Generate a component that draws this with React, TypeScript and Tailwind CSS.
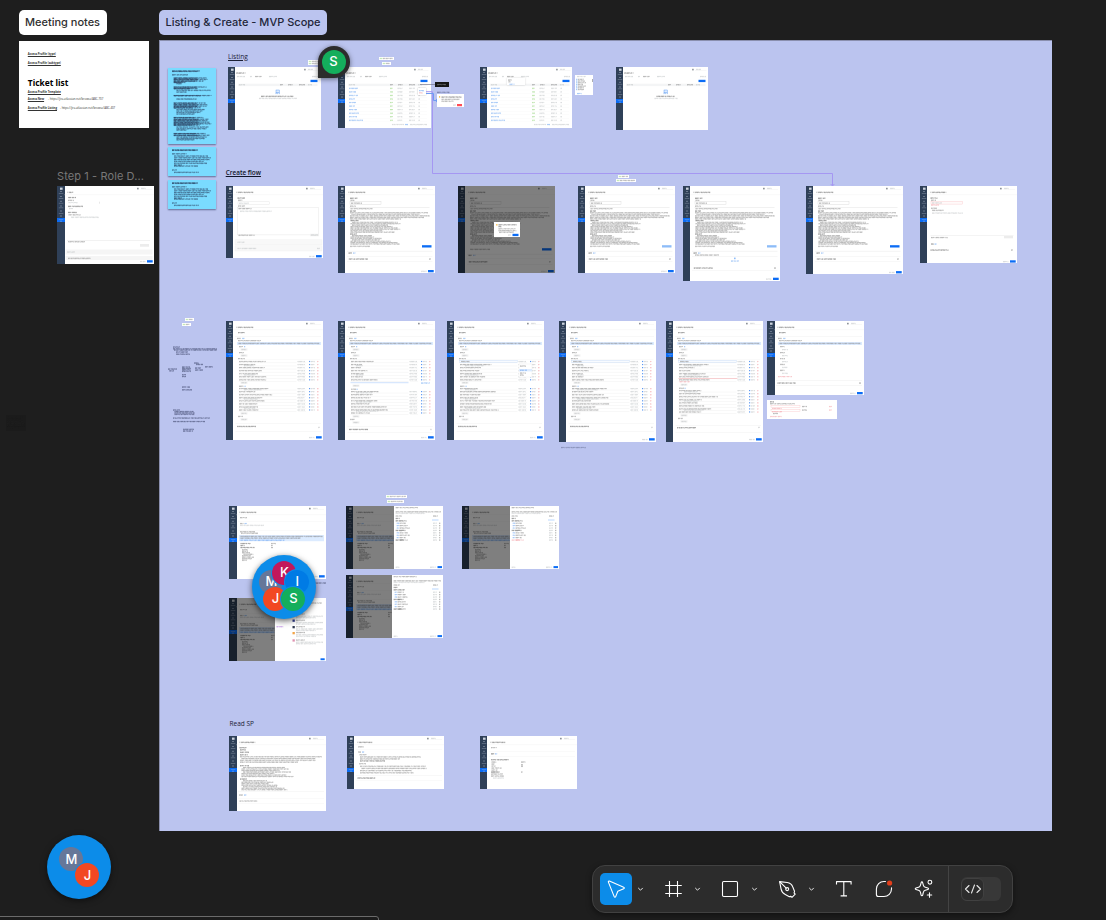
import React from "react";

type Tone = "d" | "m" | "l" | "b" | "r" | "g" | "n" | "p";
type Mark =
  | [kind: Tone, x: number, y: number, w: number]
  | [kind: "box", x: number, y: number, w: number, h: number, fill: string, stroke?: string];

const tones: Record<Tone, string> = {
  d: "#333333",
  m: "#6e6e6e",
  l: "#b2b5ba",
  b: "#4a90ee",
  r: "#f08a92",
  g: "#7ccb5c",
  n: "#1d2547",
  p: "#a050d8",
};

const noise = (n: number) => {
  const v = Math.sin(n * 127.1 + 11.7) * 43758.5453;
  return v - Math.floor(v);
};

function dashes(seed: number, min: number, span: number, gap: number) {
  const out: string[] = [];
  for (let i = 0; i < 24; i++) {
    out.push((min + noise(seed + i * 3.31) * span).toFixed(2), (0.3 + noise(seed + i * 7.93) * gap).toFixed(2));
  }
  return out.join(" ");
}

function Marks({ marks, w, h, strength = 1 }: { marks: Mark[]; w: number; h: number; strength?: number }) {
  return (
    <svg className="absolute left-0 top-0" width={w} height={h} viewBox={`0 0 ${w} ${h}`} aria-hidden="true">
      {marks.map((m, i) => {
        if (m[0] === "box") {
          return <rect key={i} x={m[1]} y={m[2]} width={m[3]} height={m[4]} fill={m[5]} stroke={m[6]} strokeWidth={0.4} />;
        }
        const [k, x, y, len] = m;
        const c = tones[k];
        const s = x * 1.7 + y * 3.1 + len;
        return (
          <g key={i} stroke={c} fill="none">
            <line x1={x} x2={x + len} y1={y} y2={y} strokeWidth={1.1} opacity={0.17 * strength} />
            <line x1={x} x2={x + len} y1={y - 0.1} y2={y - 0.1} strokeWidth={0.8} opacity={0.36 * strength} strokeDasharray={dashes(s, 0.6, 3.4, 1.3)} />
            <line x1={x} x2={x + len} y1={y + 0.4} y2={y + 0.4} strokeWidth={0.7} opacity={0.3 * strength} strokeDasharray={dashes(s + 5, 0.4, 2.2, 2.2)} />
          </g>
        );
      })}
    </svg>
  );
}

function Frame({
  x,
  y,
  w,
  h,
  marks,
  dimTo,
  children,
}: {
  x: number;
  y: number;
  w: number;
  h: number;
  marks: Mark[];
  dimTo?: number;
  children?: React.ReactNode;
}) {
  return (
    <div className="absolute flex overflow-hidden bg-white" style={{ left: x, top: y, width: w, height: h }}>
      <div className="relative w-[7.3px] shrink-0 bg-[#2f4058]">
        <div className="mt-[32px] h-[4px] w-full bg-[#0b6cf5]" />
        <svg className="absolute left-0 top-0" width="8" height="40" aria-hidden="true">
          {[5.5, 7.5, 10.5, 12.5, 15.3, 17.3, 20, 21.8, 25, 27.5, 30, 33.5, 35.2].map((v, i) => (
            <line key={v} x1={i % 2 ? 1.8 : 3} x2={i % 2 ? 6.3 : 5} y1={v} y2={v} stroke="#b9c4d4" strokeWidth="1" opacity={i % 2 ? 0.3 : 0.42} />
          ))}
          <rect x="3" y="1.6" width="2.6" height="2.2" fill="#e8edf4" opacity="0.85" />
        </svg>
      </div>
      <Marks marks={marks} w={w} h={h} />
      {dimTo !== undefined && <div className="absolute left-0 top-0 h-full bg-black/50" style={{ width: dimTo }} />}
      {children}
    </div>
  );
}

const head = (title = 15, right = 80): Mark[] => [
  ["box", right, 1.8, 1.7, 1.6, "#8d9298"],
  ["l", right + 4, 2.4, 5],
  ["box", right + 3.5, 3.6, 11.5, 0.3, "#e6e6e6"],
  ["m", 10.4, 6.2, 1],
  ["d", 12.2, 6.3, title],
  ["box", 7.3, 8.7, 90, 0.4, "#eeeeee"],
];

const foot = (y: number): Mark[] => [
  ["l", 83, y, 5.5],
  ["box", 90, y - 1.3, 5.7, 2.3, "#0b6cf5"],
];

const para = (x: number, y: number, widths: number[], step = 2, tone: Tone = "m"): Mark[] =>
  widths.map((v, i) => [tone, x + (v < 0 ? 1.5 : 0), y + i * step, Math.abs(v)] as Mark);

const proseA: Mark[] = [
  ["d", 12, 25, 6],
  ...para(12, 26.7, [78, -68, 80, 74, 51], 1.55),
  ["d", 12.5, 34.6, 8],
  ...para(12.5, 36.3, [-46, 50, -36, 42, 47, 50, 32, 44], 1.4),
  ["d", 12, 48, 7],
  ...para(12.5, 49.6, [-20, 24, 31, -28, 40, 47, 49], 1.4),
];

const form: Mark[] = [
  ["d", 12, 12.2, 7.5],
  ["m", 12.5, 14.3, 4.5],
  ["box", 12, 15.7, 31, 2.6, "#ffffff", "#d6d6d6"],
  ["m", 13, 17.1, 11],
  ["m", 12, 20.1, 6],
  ["box", 11.5, 21.6, 80, 0.4, "#dcdcdc"],
  ["m", 12.5, 22.7, 22],
];

const createFull = (btnY: number, btn: string, tasksY: number, textY: number, footY: number): Mark[] => [
  ...head(),
  ...form,
  ...proseA,
  ["m", 12, btnY, 20],
  ["box", 84, btnY - 1.1, 9.5, 2.3, btn],
  ["box", 9, btnY + 4.6, 85.5, 0.5, "#e8e8e8"],
  ["d", 10.5, tasksY, 3.5],
  ["b", 15, tasksY, 2.5],
  ["box", 9, tasksY + 3, 85.5, 0.4, "#ececec"],
  ["d", 10.8, textY, 19],
  ["m", 91, textY, 2],
  ["box", 9, textY + 2.6, 85.5, 0.4, "#ececec"],
  ...foot(footY),
];

const emptyForm: Mark[] = [
  ...head(),
  ["d", 11.5, 12, 7.5],
  ["m", 12, 14.2, 5],
  ["box", 12, 15.8, 31.5, 2.6, "#ffffff", "#e0e0e0"],
  ["l", 13, 17.2, 10],
  ["m", 12, 20, 7],
  ["box", 11.5, 21.4, 81, 27.5, "#ffffff", "#e2e2e2"],
  ["m", 12.5, 22.6, 13],
  ["l", 14, 25.2, 32],
  ["m", 12.5, 49.2, 16],
  ["box", 84, 47.8, 9, 2.4, "#f0f0f0"],
  ["l", 85, 49, 7],
];

const listHead: Mark[] = [
  ["box", 76, 1.8, 1.8, 1.6, "#9ba0a6"],
  ["l", 80, 2.4, 5],
  ["box", 79, 3.6, 11.5, 0.3, "#e6e6e6"],
  ["d", 8.3, 6, 9.5],
  ["l", 9, 9.5, 8],
  ["l", 22, 9.5, 2],
  ["m", 27, 9.5, 7],
  ["l", 41, 9.5, 8],
  ["l", 84, 9.5, 6],
  ["box", 82.5, 12.8, 7, 2.3, "#0b6cf5"],
  ["box", 10, 16.7, 79.5, 2.4, "#f4f5f6"],
  ["l", 11, 17.7, 6],
  ["m", 52, 17.7, 3],
  ["m", 60, 17.7, 4.5],
  ["m", 71, 17.7, 6],
  ["l", 80, 17.7, 4],
];

const listRows: Mark[] = Array.from({ length: 10 }, (_, i) => i)
  .flatMap((i): Mark[] => {
    const y = 21.3 + i * 3.55;
    return [
      ["b", 11, y, [9, 7, 9, 6, 7, 6, 8, 10, 8, 14][i]],
      ["g", 52, y, 3],
      ["l", 59.5, y, 5],
      ["l", 71, y, 6],
      ["l", 80.5, y, 1.5],
      ["box", 10, y + 1.6, 79, 0.2, "#f0f0f0"],
    ];
  })
  .concat([
    ["l", 54, 57.5, 12],
    ["b", 67, 57.5, 3],
    ["l", 72, 57.5, 17],
  ]);

const emptyState = (cx: number, w: number): Mark[] => [
  ["box", cx - 1.5, 23, 3.2, 2.8, "#dbeaff", "#4a90ee"],
  ["b", cx - 2, 26.4, 4.5],
  ["d", cx - w / 2, 29.3, w],
  ["l", cx - w / 2 - 2, 31.4, w + 5],
];

function taskTable(variant: number): Mark[] {
  const out: Mark[] = [
    ...head(15),
    ["d", 12, 11.6, 6.5],
    ["box", 9, 15.2, 86, 0.4, "#ededed"],
    ["m", 11, 17.4, 4],
    ["b", 16, 17.4, 2.5],
    ["m", 12, 19.6, 23],
    ["box", 11, 21, 84, 3, "#dcebff"],
    ["m", 12.5, 22.4, 81],
    ["m", 13, 25.6, 4],
    ["b", 18, 25.6, 1.2],
    ["box", 14.5, 27.3, 7, 2.4, "#f3f3f3"],
    ["l", 15.5, 28.5, 5],
    ["m", 13, 31.6, 5],
    ["box", 14.5, 33.3, 7, 2.4, "#f3f3f3"],
    ["l", 15.5, 34.5, 5],
    ["m", 12, 37.6, 7],
    ["box", 11.5, 38.6, 83, 0.3, "#efefef"],
  ];
  const alert = variant === 4;
  const shift = alert ? 2 : variant === 1 ? 3 : 0;
  const rows = [
    ...Array.from({ length: 7 }, (_, i) => 40.5 + i * 3.05),
    ...Array.from({ length: 8 }, (_, i) => 67.6 + shift + i * 3.05),
  ];
  rows.forEach((y, i) => {
    const rw = 9 + noise(i * 2.7 + variant * 0.3) * 25 + (i > 6 ? 6 : 0);
    out.push(
      ["m", 13, y, rw],
      ["l", 71.5, y, 7.5],
      ["box", 83, y - 0.6, 1.2, 1.2, "#5c98f2"],
      ["l", 85, y, 4],
      ["r", 91, y, 1.5],
      ["box", 12.5, y + 1.3, 58, 0.25, "#e2e2e2"],
      ["box", 72, y + 1.3, 8, 0.25, "#e6e6e6"],
    );
    if (i % 3 === 1) out.push(["l", 18, y + 1.1, rw * 0.6]);
  });
  if (variant > 1) out.push(["box", 12.5, 39.2, 58, 2.2, "#f8fbff", "#c3d9f5"], ["m", 14, 40.5, 9]);
  if (variant === 2)
    out.push(["box", 72, 43, 13, 13, "#ffffff", "#e8e8e8"], ["m", 73, 45, 6], ["box", 72, 48, 13, 2.4, "#dcebff"], ["b", 73, 49.2, 7], ["m", 73, 52, 6], ["m", 73, 54, 4]);
  if (alert) out.push(["box", 12.5, 57.1, 59, 0.6, "#f7b4b8"], ["r", 13.5, 60.7, 10]);
  if (variant === 1) out.push(["box", 12.5, 61.6, 58, 0.5, "#9dc3fa"], ["b", 83, 62, 9]);
  out.push(
    ["box", 14.5, 60.5 + shift, 7, 2.3, "#f3f3f3"],
    ["l", 15.5, 61.7 + shift, 5],
    ["m", 13, 65.2 + shift, 5],
    ["b", 18.5, 65.2 + shift, 1.2],
    ["box", 14.5, 91.2 + shift, 7, 2.3, "#f3f3f3"],
    ["l", 15.5, 92.4 + shift, 5],
    ["m", 12, 95.4 + shift, 5],
    ["box", 14.5, 97.2 + shift, 7, 2.3, "#f3f3f3"],
    ["l", 15.5, 98.5 + shift, 5],
    ["box", 9.5, 102.5 + shift, 85.5, 0.4, "#eeeeee"],
    ["d", 11, 105.4 + (variant === 1 ? 3 : alert ? 1.3 : 0), 19],
    ["l", 92, 105.4 + (variant === 1 ? 3 : 1), 2],
    ["box", 9.5, 110 + shift / 2, 85.5, 0.4, "#eeeeee"],
    ...foot(variant > 2 ? 118.5 : 116.5),
  );
  return out;
}

const reviewBody: Mark[] = [
  ...head(),
  ["m", 11, 11.6, 7],
  ["box", 9, 15, 86, 0.3, "#eeeeee"],
  ["m", 11, 17.5, 3.5],
  ["b", 15.5, 17.5, 2.5],
  ["l", 11, 19.3, 24],
  ["box", 9.5, 24, 85.5, 0.3, "#eeeeee"],
  ["m", 11, 25.7, 15],
  ["m", 12, 27.2, 17],
  ["box", 10, 29, 85, 6.2, "#dcebff"],
  ["m", 11.5, 30.4, 82],
  ["m", 11.5, 32.1, 60],
  ["b", 11.5, 34.2, 44],
  ["d", 11.5, 37.5, 10],
  ["m", 42, 37.5, 5],
  ["d", 11.5, 39.5, 4],
  ["m", 42, 39.5, 2],
  ["d", 11.5, 41.5, 14],
  ["m", 42, 41.5, 2],
  ...para(13, 43.7, [6, 6, 8, -10, 9, 12, 10, 5], 1.5),
];

const drawer = (x: number, w: number, footY: number, redRow = false): Mark[] => [
  ["box", x, 0, w, 80, "#ffffff"],
  ["m", x + 2, 1.6, w * 0.45],
  ["m", x + 2, 5.8, w - 4],
  ["l", x + 2, 7.3, w * 0.6],
  ["m", x + 2, 10, 6],
  ["m", x + w - 10, 10, 5],
  ["d", x + 2, 12.4, 4],
  ["box", x + w - 11, 13, 6.5, 2, "#dcebff"],
  ["d", x + 2, 14.8, 11],
  ...Array.from({ length: 8 }, (_, i): Mark[] => {
    const heading = i % 4 === 3;
    const red = redRow && i === 7;
    const y = 17.2 + i * 2.4;
    return [
      [red ? "r" : heading ? "d" : "b", x + (heading ? 2 : 3), y, heading ? 8 : 2.5],
      [red ? "r" : "m", x + 6, y, 6 + (i % 3) * 2],
      ["l", x + w - 10, y, 4],
      ["m", x + w - 4, y, 1.3],
    ];
  }).flat(),
  ["l", x + 2, footY, 4],
  ["l", x + w - 13, footY, 6],
  ["box", x + w - 5.5, footY - 1.1, 4.5, 2, "#0b6cf5"],
];

function Sticky({ h, marks }: { h: number; marks: Mark[] }) {
  return (
    <div className="relative w-full bg-[#7adbff] shadow-[0_1px_1.5px_rgba(40,50,90,0.6)]" style={{ height: h }}>
      <Marks marks={marks} w={48} h={h} strength={1.2} />
    </div>
  );
}

const stickyLong: Mark[] = [
  ["n", 4, 3, 28],
  ["n", 4, 3.3, 26],
  ["n", 4, 6.8, 16],
  ...[
    [10, 33], [11.5, 34], [13, 30], [14.3, 12], [19, 33], [20.5, 24], [27.5, 38], [35, 32], [36.7, 34], [38.2, 33], [39.7, 27],
    [49.5, 30], [51.2, 35], [52.7, 34], [54.2, 36], [55.7, 38], [57, 26], [65.5, 32], [67.2, 36],
  ].flatMap(([y, w]): Mark[] => [["n", 5.5, y, w], ["n", 6, y + 0.2, w * 0.7]]),
  ...[
    [15.7, 5], [22.3, 34], [24, 10], [31, 20], [41.5, 28], [43, 26], [44.5, 24], [46, 18], [59, 32], [60.7, 30], [62, 10],
    [69, 30], [70.5, 28], [71.8, 18],
  ].map(([y, w]): Mark => ["n", 8.5, y, w]),
];

const stickyShort: Mark[] = [
  ["n", 4, 3, 26],
  ["n", 4, 3.2, 24],
  ["n", 4, 6.8, 15],
  ...para(6, 9, [34, 37, 36, 30, 33, 8], 1.8, "n"),
  ["n", 6, 19, 24],
  ["n", 4, 23, 5],
  ["n", 6, 25.3, 25],
];

function Tag({ x, y, w }: { x: number; y: number; w: number }) {
  return (
    <div className="absolute h-[3px] bg-white" style={{ left: x, top: y, width: w }}>
      <Marks marks={[["g", 0.8, 1.4, 3], ["m", 4, 1.4, w - 5]]} w={w} h={3} />
    </div>
  );
}

function Avatar({ x, y, letter, tone }: { x: number; y: number; letter: string; tone: string }) {
  return (
    <div
      className={`absolute flex size-6 items-center justify-center rounded-full font-[Inter] text-[13px] font-medium text-white ${tone}`}
      style={{ left: x, top: y }}
    >
      {letter}
    </div>
  );
}

function Tool({ children, active, menu }: { children: React.ReactNode; active?: boolean; menu?: boolean }) {
  return (
    <div className="flex items-center">
      <button className={`flex size-8 items-center justify-center rounded-[5px] ${active ? "bg-[#0c8ce9]" : ""}`}>
        <svg width="24" height="24" viewBox="0 0 24 24" fill="none" stroke="#ffffff" strokeWidth="1.1" strokeLinecap="round" strokeLinejoin="round">
          {children}
        </svg>
      </button>
      {menu && (
        <div className="flex w-4 items-center justify-center">
          <svg width="8" height="8" viewBox="0 0 8 8" fill="none" stroke="#e6e6e6" strokeLinecap="round" strokeLinejoin="round">
            <path d="M2.5 3.2 4.5 5.2 6.5 3.2" />
          </svg>
        </div>
      )}
    </div>
  );
}

function Toolbar() {
  return (
    <div className="absolute left-[592px] top-[865px] flex h-[48px] w-[421px] items-center rounded-[13px] border border-[#414141] bg-[#2c2c2c] pl-[7px] shadow-[0_2px_6px_rgba(0,0,0,0.45)]">
      <div className="flex items-center gap-[9px]">
        <Tool active menu>
          <path d="M5.4 4.1c-.7-.2-1.2.3-1 1l5.8 14.5c.3.8 1.2.8 1.5 0l2.1-5.4 5.9-2.4c.8-.3.8-1.3 0-1.6z" />
        </Tool>
        <Tool menu>
          <path d="M8.5 4.5v15M16.5 4.5v15M4.8 8.5h15.4M4.8 16.5h15.4" strokeLinecap="square" />
        </Tool>
        <Tool menu>
          <rect x="4.5" y="4.5" width="15" height="15" rx="1.2" />
        </Tool>
        <Tool menu>
          <path d="M4.6 4.6 12.2 5.5c2.6.4 4.6 1.9 5.5 4.3l1.8 4.4c.1.7-.1 1.2-.5 1.6l1.2 1.4-3.2 3.1-1.4-1.1c-.5.4-1.1.5-1.7.2l-3.6-1.8c-2.3-1-3.7-3-4.2-5.4z" />
          <path d="M4.9 4.9 11.2 11.1" />
          <circle cx="12.2" cy="12.1" r="1.5" />
        </Tool>
      </div>
      <div className="ml-[9px] flex items-center gap-2">
        <Tool>
          <path d="M4.5 7.5V4.6h14.6v2.9M11.8 4.6v14.3M8.6 18.9H15" strokeLinecap="butt" />
        </Tool>
        <Tool>
          <path d="M13.5 4.5H12A7.5 7.5 0 0 0 4.4 12v5.5c0 1.2.8 2 2 2H12a7.6 7.6 0 0 0 7.5-7.5v-1.2" />
          <circle cx="17.6" cy="6" r="2.6" fill="#e03e1a" stroke="none" />
        </Tool>
        <Tool>
          <path d="M10.3 4.2c.6 0 .7.4.8.9l.7 2.5c.3 1 .9 1.6 1.9 1.9l2.5.8c1 .3 1 1.2 0 1.5l-2.5.8c-1 .3-1.6.9-1.9 1.9l-.7 2.8c-.3 1-1.3 1-1.6 0l-.7-2.8c-.3-1-.9-1.6-1.9-1.9l-2.5-.8c-1-.3-1-1.2 0-1.5l2.5-.8c1-.3 1.6-.9 1.9-1.9l.7-2.5c.1-.5.3-.9.8-.9z" transform="translate(-.4 .7)" />
          <circle cx="17.9" cy="5.2" r="1.9" />
          <path d="M17.5 15.8v4.4M15.3 18h4.4" />
        </Tool>
      </div>
      <div className="ml-[8px] h-full w-px bg-[#444444]" />
      <div className="ml-[12px] flex h-6 w-10 items-center rounded-[6px] bg-[#383838]">
        <div className="flex h-[23px] w-[23px] items-center justify-center rounded-[6px] border border-[#414141] bg-[#2c2c2c]">
          <svg width="18" height="12" viewBox="0 0 18 12" fill="none" stroke="#e6e6e6" strokeWidth="1.1" strokeLinecap="round" strokeLinejoin="round">
            <path d="M5 2.5 1.5 6 5 9.5M13 2.5 16.5 6 13 9.5M10.5 2 7.5 10" />
          </svg>
        </div>
      </div>
    </div>
  );
}

const blue = "#0b6cf5";
const paleBlue = "#8dbcf8";

const diagramNotes: Mark[] = [
  ["n", 5, 1, 7],
  ["n", 5, 2.8, 44],
  ["n", 6, 4, 43],
  ["n", 8, 6, 12],
  ["n", 8, 8.1, 14],
  ["n", 0, 23, 9],
  ["n", 1, 24.8, 5],
  ...para(14, 21, [8, 9, 9, 9], 1.4, "n"),
  ["n", 14, 28.7, 4],
  ["n", 14, 30.5, 4],
  ["n", 26, 17, 5],
  ["n", 28, 18.4, 7],
  ["n", 27, 22, 6],
  ["n", 27, 24, 8],
  ["n", 37, 20.8, 8],
  ["n", 14, 41, 8],
  ["n", 14, 43.8, 10],
  ["n", 5, 64, 7],
  ...para(6.5, 65.5, [19, 20, 20], 1.4, "n"),
  ["n", 5, 72, 37],
  ["n", 5, 75.5, 32],
  ["n", 15, 83.3, 11],
  ["n", 15, 85, 10],
];

export default function App() {
  return (
    <main className="relative h-[920px] w-[1106px] overflow-hidden bg-[#1e1e1e] font-[Inter,sans-serif]">
      <div className="absolute left-[6px] top-[415px] h-[16px] w-[20px] bg-[#1b1b1b]">
        <Marks marks={para(1, 2, [17, 14, 16, 19, 18, 15], 2.2)} w={20} h={16} strength={0.1} />
      </div>

      <div className="absolute left-[18.5px] top-[10px] flex flex-col items-start gap-[6px]">
        <div className="flex h-[24.5px] w-[88px] items-center justify-center whitespace-nowrap rounded-[5px] bg-white text-[11px] font-medium text-[#303030]">
          Meeting notes
        </div>
        <section className="h-[87.5px] w-[130.5px] bg-white px-[9.3px] font-['Open_Sans',sans-serif] text-[2.8px] text-[#333]">
          <p className="mt-[12px] h-[3.5px] font-bold leading-[3.5px] underline">Access Profile (type)</p>
          <p className="mt-[6px] h-[3.5px] font-bold leading-[3.5px] underline">Access Profile (subtype)</p>
          <h2 className="mt-[11px] h-[11px] whitespace-nowrap font-['Noto_Sans',sans-serif] text-[8.4px] font-bold leading-[11px] text-black">Ticket list</h2>
          <p className="mt-[3px] h-[3.5px] font-bold leading-[3.5px] underline">Access Profile Template</p>
          <p className="mt-[3.5px] flex h-[3.5px] gap-[4px] whitespace-nowrap leading-[3.5px]">
            <b className="underline">Access New</b>
            <span>- https://jira.atlassian.net/browse/ABC-707</span>
          </p>
          <p className="mt-[5.5px] flex h-[3.5px] gap-[3px] whitespace-nowrap leading-[3.5px]">
            <b className="underline">Access Profile Listing</b>
            <span>- https://jira.atlassian.net/browse/ABC-407</span>
          </p>
        </section>
      </div>

      <div className="absolute left-[159px] top-[10px] flex flex-col items-start gap-[5.5px]">
        <div className="flex h-[24.5px] w-[168px] items-center justify-center whitespace-nowrap rounded-[5px] bg-[#bbc4ef] text-[11px] font-medium text-[#22263a]">
          Listing &amp; Create - MVP Scope
        </div>
        <div className="h-[791px] w-[893px] border-l border-t border-[#8a8fae] bg-[#bbc4ef]" />
      </div>

      <div className="absolute left-[57px] top-[169px] whitespace-nowrap text-[11px] leading-[14px] tracking-[0.1px] text-[#787878]">Step 1 - Role D...</div>
      <Frame
        x={57.3}
        y={186}
        w={97}
        h={77.5}
        marks={[
          ...head(4),
          ["d", 11, 11.5, 8],
          ["m", 11, 14.3, 6],
          ["l", 11.5, 16.6, 9],
          ["box", 42.5, 15.7, 0.5, 2, "#d0d0d0"],
          ["d", 11, 20.3, 15],
          ["l", 12, 22.6, 4],
          ["d", 11, 26.4, 9],
          ["m", 11.5, 28.8, 12],
          ["l", 14, 31.2, 28],
          ["box", 10, 54.5, 83, 0.4, "#dddddd"],
          ["m", 11, 55.7, 17],
          ["box", 83, 58, 9, 2.7, "#ececec"],
          ["box", 8.5, 63.5, 87, 5, "#f5f5f5"],
          ["l", 10, 66, 8],
          ["box", 8.5, 70, 87, 4, "#f5f5f5"],
          ["m", 11, 72.3, 23],
          ...foot(75.5),
        ]}
      />

      <div className="absolute left-[167.5px] top-[67.5px] flex w-[48px] flex-col gap-[3.5px]">
        <Sticky h={76} marks={stickyLong} />
        <Sticky h={29} marks={stickyShort} />
        <Sticky h={29.5} marks={stickyShort} />
      </div>

      <div className="absolute left-[228px] top-[51.5px] whitespace-nowrap font-['Open_Sans',sans-serif] text-[6.6px] leading-[10px] text-[#1c2036] underline">Listing</div>
      <div className="absolute left-[225.7px] top-[168px] whitespace-nowrap font-['Open_Sans',sans-serif] text-[6.4px] font-semibold leading-[10px] text-[#11152a] underline">Create flow</div>
      <div className="absolute left-[229.5px] top-[718.5px] whitespace-nowrap font-['Open_Sans',sans-serif] text-[6.5px] font-medium leading-[10px] text-[#1c2036]">Read SP</div>

      <Tag x={308} y={59.5} w={12} />
      <Tag x={308} y={62} w={12} />
      <Frame x={228} y={67} w={92.7} h={63} marks={[...listHead, ...emptyState(49.5, 33)]} />
      <Tag x={379} y={57} w={15} />
      <Tag x={382} y={61.8} w={9} />
      <Frame x={338} y={67} w={92.7} h={61} marks={[...listHead, ...listRows]}>
        <div className="absolute left-[80px] top-[21px] h-[7px] w-[8px] bg-white shadow-[0_0_1.5px_rgba(0,0,0,0.3)]">
          <Marks marks={[["b", 1, 2.6, 5], ["r", 1, 4.8, 4]]} w={8} h={7} />
        </div>
      </Frame>
      <Frame x={480} y={67} w={92.2} h={61} marks={[...listHead, ...listRows]}>
        <div className="absolute left-[26.5px] top-[10.5px] h-[7.5px] w-[18px] bg-white shadow-[0_0_2px_rgba(0,0,0,0.2)]">
          <Marks marks={[["m", 1, 2, 4], ["m", 1.5, 3.8, 2], ["b", 2.5, 6.2, 5]]} w={18} h={8} />
        </div>
      </Frame>
      <div className="absolute left-[575px] top-[75px] h-[20px] w-[18px] bg-white">
        <Marks
          marks={[["l", 2, 1.5, 9], ...para(3, 4.3, [6, 7, 8, 5, 8, 6, 6], 1.7), ...para(1, 4.3, [1.5, 1.5, 1.5, 1.5, 1.5, 1.5, 1.5], 1.7, "b"), ["b", 2, 18.5, 5], ["box", 17, 4, 0.8, 3, "#999"]]}
          w={18}
          h={20}
        />
      </div>
      <Frame x={616} y={67} w={92} h={63} marks={[...listHead, ...emptyState(49.5, 18)]} />

      <svg className="absolute left-[410px] top-[80px]" width="430" height="108" fill="none" aria-hidden="true">
        <path d="M10 4.5H26" stroke="#77798c" strokeWidth=".7" />
        <path d="M16 11.7H22.5V93.5H422.5V105.5M420.7 104 422.5 106 424.3 104" stroke="#a597f2" />
        <path d="M16 13.5H23.5V20.5H27.5M26 19 28 20.5 26 22" stroke="#6e9cf2" />
      </svg>
      <div className="absolute left-[435px] top-[82px] h-[5px] w-[14px] bg-[#161616]">
        <Marks marks={[["l", 2, 2.5, 9]]} w={14} h={5} />
      </div>
      <Marks marks={[["n", 437, 92.3, 13]]} w={465} h={95} strength={0.8} />
      <div className="absolute left-[437.3px] top-[93.5px] h-[13.5px] w-[27px] bg-white">
        <Marks marks={[["box", 2, 2.2, 1.2, 1.4, "#f6b93b"], ["d", 4.5, 3, 20], ["m", 4.5, 5.3, 18], ["m", 4.5, 7.2, 12], ["l", 16, 11, 3], ["box", 20, 10, 5, 2.2, "#ff4b55"]]} w={27} h={14} />
      </div>

      <Frame
        x={225.5}
        y={185.5}
        w={97}
        h={72.5}
        marks={[
          ...emptyForm,
          ["box", 9, 53.8, 87, 5, "#f8f8f8", "#efefef"],
          ["l", 11.5, 56.2, 7],
          ["box", 9, 59.8, 87, 5.2, "#f8f8f8", "#efefef"],
          ["l", 11.5, 62.4, 19],
          ["l", 91, 62.4, 3],
          ...foot(70.4),
        ]}
      />
      <Frame x={338} y={185.5} w={97} h={87} marks={createFull(60.3, blue, 67, 73, 85.3)} />
      <Frame x={458} y={185.5} w={97} h={87} marks={createFull(63.3, blue, 69.3, 75.8, 85.3)} dimTo={97}>
        <div className="absolute left-[35.5px] top-[36px] h-[15.5px] w-[26.5px] bg-white">
          <Marks marks={[["box", 2, 2, 1.6, 1.6, "#f8cd75"], ["d", 4.5, 2.8, 18], ["d", 4.5, 4.6, 3], ["m", 4.5, 6.8, 17], ["m", 4.5, 8.6, 18], ["m", 5, 10.2, 15], ["l", 14, 13, 3], ["box", 18.5, 11.8, 6, 2.3, blue]]} w={27} h={16} />
        </div>
      </Frame>
      <Tag x={618} y={175.3} w={11} />
      <Tag x={616} y={179.2} w={20} />
      <Frame x={578} y={185.5} w={97} h={87} marks={createFull(60.3, paleBlue, 67, 73, 85.3)} />
      <Frame
        x={683}
        y={185.5}
        w={97}
        h={95.3}
        marks={[...createFull(60.3, paleBlue, 67, 82, 93), ["m", 12, 69, 24], ["box", 51, 71.6, 1.6, 1.6, paleBlue], ["b", 48, 75, 8]]}
      />
      <Frame x={806} y={185.5} w={97} h={88.5} marks={createFull(60.3, blue, 67, 73, 86.4)} />
      <Frame
        x={920}
        y={185.5}
        w={97}
        h={77.8}
        marks={[
          ...head(14),
          ["d", 10.5, 12, 7],
          ["m", 11, 14.2, 5],
          ["box", 11, 15.5, 31.5, 2.6, "#fffafa", "#f9c6c9"],
          ["l", 12, 16.9, 10],
          ["r", 11, 19, 8],
          ["m", 11, 22.2, 6],
          ["m", 12, 24.3, 12],
          ["l", 12, 27, 31],
          ["box", 10.5, 49.6, 83, 0.4, "#e4e4e4"],
          ["m", 11, 51.5, 17],
          ["box", 84, 50, 9, 2.3, "#ececec"],
          ["d", 11, 58, 3],
          ["b", 14.5, 58, 2],
          ["d", 10.5, 64, 18],
          ["m", 91, 64, 2],
          ...foot(75.6),
        ]}
      />

      <Tag x={185} y={318} w={9} />
      <Tag x={182.3} y={323} w={8.5} />
      <div className="absolute left-[168px] top-[345.5px]">
        <Marks marks={diagramNotes} w={54} h={90} strength={1.05} />
      </div>

      <Frame x={225.5} y={321} w={97} h={119} marks={taskTable(0)} />
      <Frame x={338} y={321} w={97} h={119} marks={taskTable(1)} />
      <Frame x={446.5} y={321} w={97} h={119} marks={taskTable(2)} />
      <Frame x={559} y={321} w={97} h={121} marks={taskTable(3)} />
      <Frame x={665.5} y={321} w={97} h={121} marks={taskTable(4)} />
      <Frame
        x={767.3}
        y={321}
        w={97}
        h={74}
        marks={[
          ...taskTable(0).slice(0, 13),
          ...[25.6, 31.6, 37.6, 43.4, 49.3].flatMap((y): Mark[] => [["m", 13, y, 5], ["l", 15, y + 3, 6]]),
          ["r", 11, 55.6, 14],
          ["box", 9, 59.5, 86, 0.4, "#eaeaea"],
          ["d", 10.5, 62, 18],
          ["m", 92, 62, 2],
          ["box", 9, 64.5, 86, 0.4, "#eaeaea"],
          ...foot(72.3),
        ]}
      />
      <div className="absolute left-[767.3px] top-[400px] h-[18.5px] w-[69.7px] bg-white">
        <Marks
          marks={[["d", 3, 1.8, 4], ["m", 3, 3.7, 25], ["box", 4, 5.5, 29, 1.9, "#fff", "#f9c6c9"], ["m", 35, 6.5, 5], ["r", 5, 8.5, 10], ["box", 4, 9.3, 29, 1.9, "#fff", "#f9c6c9"], ["m", 35, 10, 5], ["r", 5, 11.7, 10], ["m", 6, 13.5, 5], ["r", 62, 6.5, 3], ["r", 62, 10, 3], ["r", 3, 16.5, 12]]}
          w={70}
          h={19}
        />
      </div>
      <Marks marks={[["n", 561, 447.5, 25]]} w={590} h={450} strength={0.6} />

      <Frame x={229.3} y={506} w={97} h={73} marks={[...reviewBody, ...foot(70.5)]} />
      <Marks marks={[["n", 304, 583, 22]]} w={330} h={590} />
      <Frame
        x={229.3}
        y={597.5}
        w={97}
        h={63}
        dimTo={45.5}
        marks={[
          ...reviewBody,
          ["box", 45.5, 0, 52, 63, "#ffffff"],
          ["m", 48, 5, 45],
          ["p", 47.5, 28.7, 7],
          ["box", 63.5, 21.5, 2.3, 2.3, "#2f3a8a"],
          ["box", 63.5, 28, 2.3, 2.3, "#323b52"],
          ["box", 63.5, 34, 2.3, 2.3, "#f3a547"],
          ["box", 63.5, 41.3, 2.3, 2.3, "#df93b1"],
          ...[16, 22.3, 28.7, 34.5, 42].flatMap((y): Mark[] => [["m", 67, y, 9], ["l", 67, y + 2.2, 27], ["l", 67, y + 3.7, 20]]),
          ["box", 91.5, 60.3, 4.2, 1.9, blue],
        ]}
      />
      <Tag x={386} y={495.3} w={21} />
      <Tag x={387} y={500} w={17} />
      <Frame x={346} y={506} w={97} h={63} dimTo={47.7} marks={[...reviewBody, ...drawer(47.7, 49.3, 61.2)]} />
      <Frame x={346} y={575} w={97} h={63} dimTo={45.7} marks={[...reviewBody, ...drawer(45.7, 51.3, 61.2)]} />
      <Frame x={462} y={506} w={97} h={63} dimTo={47.7} marks={[...reviewBody, ...drawer(47.7, 49.3, 61.2, true)]} />

      <Frame
        x={229.3}
        y={735.7}
        w={97}
        h={75}
        marks={[
          ...head(14),
          ["d", 10.5, 11.7, 7],
          ["d", 11, 13.8, 6],
          ["d", 11, 16.2, 9],
          ["d", 11, 18.8, 8],
          ...para(11, 20.7, [82, -74, 76, 58], 1.8),
          ["d", 11, 29.7, 9],
          ...para(12.5, 31.5, [-42, 47, 38, -48, 33, 45, 52], 1.5),
          ["d", 11, 43, 7],
          ...para(12.5, 44.7, [-24, 32, 27, 36, -34, 43, 46], 1.5),
          ["box", 9, 55, 86, 0.3, "#e8e8e8"],
          ["m", 10, 59, 4],
          ["b", 15, 59, 2.5],
          ["box", 9, 62, 86, 0.3, "#eeeeee"],
          ["m", 10.5, 65, 18],
          ["box", 9, 67, 86, 0.3, "#eeeeee"],
        ]}
      />
      <Frame
        x={347}
        y={735.7}
        w={97}
        h={53}
        marks={[
          ...head(13),
          ["m", 11, 10.8, 6],
          ["box", 9, 13.6, 86, 0.3, "#eeeeee"],
          ["m", 11, 16, 3],
          ["b", 15, 16, 2.2],
          ["m", 12.5, 18.7, 7],
          ["m", 13, 20.9, 61],
          ["m", 13, 22.9, 40],
          ["d", 13, 24.9, 25],
          ["m", 12, 27.7, 7],
          ...para(13, 30.2, [66, -65, 52, 54], 2.2),
          ["box", 9, 39.3, 86, 0.3, "#e8e8e8"],
          ["d", 10.5, 42, 18],
          ["box", 9, 44.5, 86, 0.3, "#eeeeee"],
        ]}
      />
      <Frame
        x={480}
        y={735.7}
        w={97}
        h={53}
        marks={[
          ...head(13),
          ["m", 11, 11.6, 6],
          ["box", 9, 15.5, 86, 0.3, "#eeeeee"],
          ["d", 11, 17.8, 3.5],
          ["b", 15, 17.8, 2.2],
          ["box", 9, 20.5, 86, 0.3, "#eeeeee"],
          ["d", 11, 23.7, 18],
          ...para(11.5, 26, [5, 3, 4, 10, 6, 6], 2),
          ["m", 41, 26, 5],
          ["m", 41, 28.7, 2],
          ["m", 41, 30.2, 2],
          ["m", 11, 36, 9],
          ["m", 41, 36, 2],
          ["m", 11, 38, 12],
          ["m", 11, 40, 13],
          ["l", 13, 42, 11],
        ]}
      />

      <div className="absolute left-[317.5px] top-[46px] size-8 rounded-full rounded-bl-none bg-[#2c2c2c] shadow-[0_1px_5px_rgba(0,0,0,0.5)]">
        <Avatar x={4} y={4} letter="S" tone="bg-[#14ae5c]" />
      </div>

      <div className="absolute left-[252.4px] top-[555px] size-16 rounded-full bg-[#0c8ce9] shadow-[0_2px_6px_rgba(0,0,0,0.6)]">
        <Avatar x={7} y={15} letter="M" tone="bg-[#667799]" />
        <Avatar x={11} y={32} letter="J" tone="bg-[#f24822]" />
        <Avatar x={20} y={6} letter="K" tone="bg-[#c2185b] shadow-[0_0_0_1px_#0c8ce9]" />
        <Avatar x={33} y={15} letter="I" tone="bg-[#007be5] shadow-[0_0_0_1px_#0c8ce9]" />
        <Avatar x={29} y={32} letter="S" tone="bg-[#14ae5c] shadow-[0_0_0_1px_#0c8ce9]" />
      </div>

      <div className="absolute left-[47.4px] top-[835.4px] size-16 rounded-full bg-[#0c8ce9] shadow-[0_2px_6px_rgba(0,0,0,0.5)]">
        <Avatar x={12} y={12} letter="M" tone="bg-[#667799]" />
        <Avatar x={28} y={28} letter="J" tone="bg-[#f24822] shadow-[0_0_0_1px_#0c8ce9]" />
      </div>

      <Toolbar />
      <div className="absolute -left-1 top-[916px] h-4 w-[383px] rounded-tr-[3px] border border-[#6b6b6b] bg-[#1c1c1c]" />
    </main>
  );
}
